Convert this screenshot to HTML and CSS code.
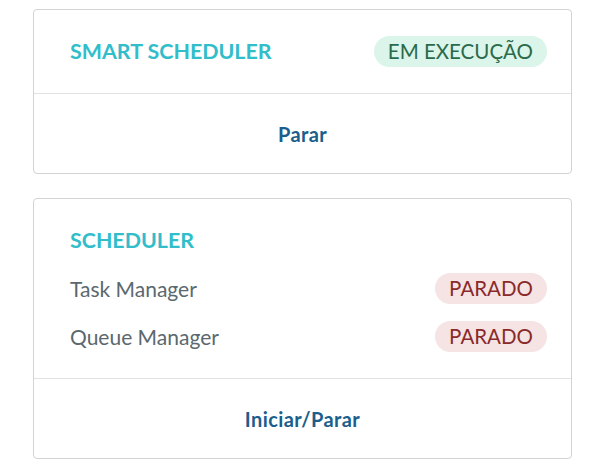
FILE: index.html
```html
<!DOCTYPE html>
<html lang="pt">
<head>
<meta charset="utf-8">
<title>Schedulers</title>
<link rel="stylesheet" href="styles.css">
</head>
<body>
<div class="page">
  <section class="card">
    <div class="card-body header-row">
      <h2 class="title">SMART SCHEDULER</h2>
      <span class="badge badge-ok">EM EXECUÇÃO</span>
    </div>
    <div class="card-footer"><button class="action">Parar</button></div>
  </section>
  <section class="card">
    <div class="card-body">
      <h2 class="title">SCHEDULER</h2>
      <div class="row"><span class="label">Task Manager</span><span class="badge badge-stop">PARADO</span></div>
      <div class="row"><span class="label">Queue Manager</span><span class="badge badge-stop">PARADO</span></div>
    </div>
    <div class="card-footer"><button class="action">Iniciar/Parar</button></div>
  </section>
</div>
</body>
</html>
```
FILE: styles.css
```css
* { box-sizing: border-box; }
html, body { margin: 0; padding: 0; background: #fff; }
body { font-family: "Lato", "Open Sans", sans-serif; }
.page {
  padding: 9px 30px 0 33px;
  display: flex;
  flex-direction: column;
  gap: 24px;
}
.card {
  border: 1px solid #d3d3d3;
  border-radius: 4px;
  background: #fff;
}
.card-body {
  padding: 26px 24px 26px 36px;
  display: flex;
  flex-direction: column;
  gap: 17px;
}
.header-row {
  flex-direction: row;
  justify-content: space-between;
  align-items: center;
}
.title {
  margin: 0;
  font-size: 21.4px;
  font-weight: 700;
  color: #31bdca;
  line-height: 31px;
}
.row {
  display: flex;
  justify-content: space-between;
  align-items: center;
  height: 31px;
}
.label {
  font-size: 21px;
  color: #5b686e;
}
.badge {
  display: inline-block;
  height: 31px;
  line-height: 31px;
  padding: 0 14px;
  border-radius: 16px;
  font-size: 20.5px;
}
.badge-ok { background: #dbf5ea; color: #2a6a4c; }
.badge-stop { background: #f6e4e4; color: #8a2a2a; }
.card-footer {
  border-top: 1px solid #e2e2e2;
  height: 80px;
  display: flex;
  align-items: center;
  justify-content: center;
}
.action {
  border: none;
  background: none;
  padding: 0;
  font-family: inherit;
  font-size: 20px;
  font-weight: 700;
  letter-spacing: 0.4px;
  color: #1b5e8c;
  cursor: pointer;
}
```
